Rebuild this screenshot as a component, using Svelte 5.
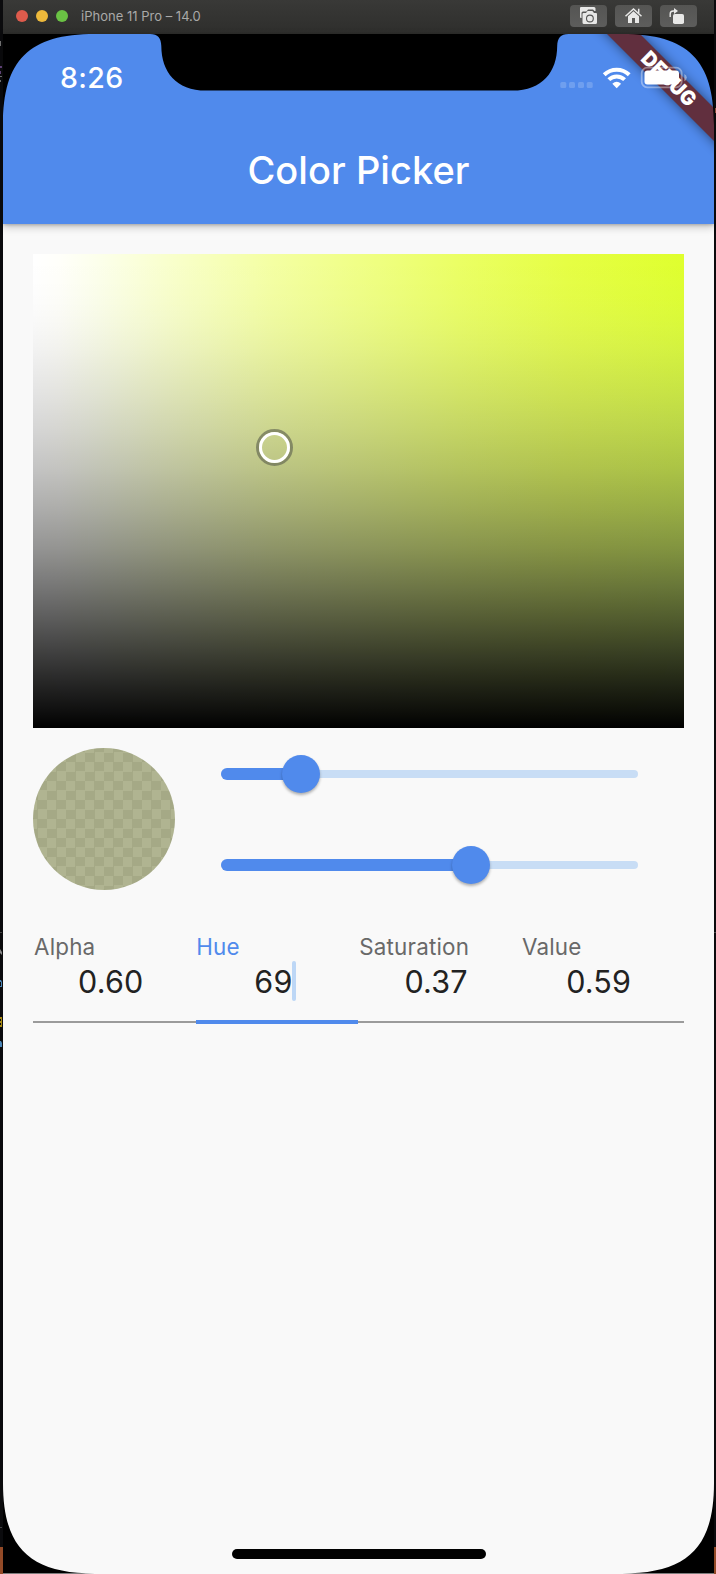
<script>
  const fields = [
    { label: 'Alpha', value: '0.60' },
    { label: 'Hue', value: '69', active: true },
    { label: 'Saturation', value: '0.37' },
    { label: 'Value', value: '0.59' }
  ];
  const sliders = [19.2, 60];
  // Darkness of the brightness axis, from the top edge to the bottom edge.
  const curve = [
    [0, 0], [5, 0.002], [10, 0.012], [15, 0.028], [20, 0.052], [30, 0.112], [37, 0.165], [45, 0.232],
    [54, 0.325], [62, 0.42], [70, 0.535], [77, 0.64], [84, 0.75], [92, 0.875], [97, 0.95], [100, 1]
  ];
  const stops = curve.map(([at, a]) => `rgba(0,0,0,${a}) ${at}%`).join(',');
</script>

<div class="desktop">
  <svg class="edges" width="716" height="1574" viewBox="0 0 716 1574">
    <path d="M0 41h1v5H0zM0 76h2v1H0zM0 80h1v2H0z" fill="#777" />
    <path d="M0 66h2v2H0zM0 71h1v3H0z" fill="#66477f" />
    <path d="M0 932h2v1H0zM0 1527h2v1H0zM714 932h2v1h-2z" fill="#444" />
    <path d="M0 949l2 3v3l-2-2z" fill="#888" />
    <path d="M0 980h1l1 2v5H0v-1h1v-4H0zM0 1041h1l1 2v4H0z" fill="#4b86b8" />
    <path d="M0 1017h2v10H0v-2h1v-2H0v-2h1v-2H0z" fill="#a98b13" />
    <path d="M0 1547h3v27H0zM714 1547h2v27h-2z" fill="#934a27" />
    <path d="M715 108h1v5h-1z" fill="#9b5540" />
  </svg>
  <div class="window">
    <header class="titlebar">
      <i class="light red"></i><i class="light yellow"></i><i class="light green"></i>
      <span class="name">iPhone 11 Pro – 14.0</span>
      <div class="tools">
        <button aria-label="Screenshot">
          <svg width="37" height="22" viewBox="0 0 37 22">
            <path d="M11 2h13q1.500 0 1.500 1.500V6h-1l-1.500-1.500h-5l-1.500 2H13q-1.500 0-1.500 1.500v5H11q-1 0-1-1V3q0-1 1-1z" fill="#e8e8e7" />
            <path d="M13.500 8h2.500l1.600-2h4.800L24 8h2q1 0 1 1v8.500q0 1.500-1.500 1.500h-11.500q-1.500 0-1.500-1.500V9q0-1 1-1z" fill="#e8e8e7" />
            <circle cx="19.900" cy="13.500" r="3.400" fill="#e8e8e7" stroke="#555" stroke-width="1.100" />
          </svg>
        </button>
        <button aria-label="Home">
          <svg width="37" height="22" viewBox="0 0 37 22">
            <path d="M10.500 11.300 18.500 4l8 7.300M23.700 3.800V8" fill="none" stroke="#e8e8e7" stroke-width="1.500" />
            <path d="M13 11.200 18.500 6.300 24 11.200V18H20v-5h-3v5h-4z" fill="#e8e8e7" />
          </svg>
        </button>
        <button aria-label="Rotate">
          <svg width="37" height="22" viewBox="0 0 37 22">
            <rect x="13" y="9" width="11" height="10" rx="1.800" fill="#e8e8e7" />
            <path d="M10.200 12V9q0-3 3-3h2" fill="none" stroke="#e8e8e7" stroke-width="1.400" />
            <path d="M14 3l4 3-4 3z" fill="#e8e8e7" />
          </svg>
        </button>
      </div>
    </header>

    <main class="screen">
      <div class="appbar">
        <div class="status"><span class="time">8:26</span></div>
        <h1>Color Picker</h1>
      </div>

      <div class="content">
        <div class="palette">
          <div class="shade" style="background-image: linear-gradient({stops})"></div>
          <div class="tint"></div>
          <span class="picker"></span>
        </div>

        <div class="controls">
          <div class="swatch"></div>
          <div class="sliders">
            {#each sliders as v}
              <div class="slider">
                <span class="track"></span>
                <span class="fill" style="width: {v}%"></span>
                <span class="thumb" style="left: {v}%"></span>
              </div>
            {/each}
          </div>
        </div>

        <div class="fields">
          {#each fields as f}
            <div class="field" class:active={f.active}>
              <span class="label">{f.label}</span>
              <span class="value">{f.value}{#if f.active}<i class="caret"></i>{/if}</span>
            </div>
          {/each}
        </div>
      </div>
      <div class="home"></div>

      <svg class="overlay" width="711" height="1540" viewBox="3 34 711 1540">
        <defs>
          <filter id="soft" x="-30%" y="-30%" width="160%" height="160%"><feGaussianBlur stdDeviation="6" /></filter>
        </defs>
        <g fill="#fff" fill-opacity=".18">
          <rect x="560.300" y="82" width="6" height="6" rx="1.500" />
          <rect x="569" y="82" width="6" height="6" rx="1.500" />
          <rect x="578" y="82" width="6" height="6" rx="1.500" />
          <rect x="586.700" y="82" width="6" height="6" rx="1.500" />
        </g>
        <path d="M593 20 734 161H767L626 20z" fill="#000" opacity=".5" filter="url(#soft)" />
        <path d="M593 20 734 161V128L626 20z" fill="#612f3e" />
        <text x="0" y="7.200" transform="translate(669 78.800) rotate(45)" text-anchor="middle" textLength="68" lengthAdjust="spacingAndGlyphs" class="debug">DEBUG</text>
        <g fill="none" stroke="#fff" stroke-width="4">
          <path d="M604.200 74.800A18 18 0 0 1 629.200 74.800" />
          <path d="M608.800 79.600A11.300 11.300 0 0 1 624.600 79.600" />
        </g>
        <path d="M612.300 83.800q4.400-4.200 8.800 0l-4.400 4.400z" fill="#fff" />
        <rect x="641.700" y="67.700" width="40" height="19.600" rx="5.500" fill="none" stroke="#fff" stroke-opacity=".38" stroke-width="1.800" />
        <rect x="644.500" y="70.500" width="34.500" height="14" rx="3" fill="#fff" />
        <path d="M684.300 74q2.500 1 2.500 3.600t-2.500 3.600z" fill="#fff" fill-opacity=".42" />
        <path fill="#000" d="M3 34V125C3 60 29 34 95 34zM150 34C158 34 161 38 161.300 46C161.500 72 176 90.600 206 90.600H512.500C542.500 90.600 557 72 557.200 46C557.500 38 560.500 34 568.500 34zM714 34V125C714 60 688 34 622 34zM3 1573.500V1483C3 1547 29 1573.500 95 1573.500zM714 1573.500V1483C714 1547 688 1573.500 622 1573.500z" />
      </svg>
    </main>
  </div>
</div>

<style>
  :global(body) { background: #0b0b0d; overflow: hidden; }
  * { box-sizing: border-box; }
  .desktop { position: relative; width: 716px; height: 1574px; padding-left: 3px; background: #0b0b0d; font-family: Inter, "Liberation Sans", sans-serif; }
  .edges { position: absolute; left: 0; top: 0; }
  .window { position: relative; width: 711px; height: 1574px; display: flex; flex-direction: column; border-radius: 0 0 4px 4px; }
  .titlebar { height: 34px; display: flex; align-items: center; padding: 0 17px 2px 13px; background: linear-gradient(#393937, #2e2e2c); }
  .light { width: 12px; height: 12px; border-radius: 50%; margin-right: 8px; }
  .red { background: #de5b4c; }
  .yellow { background: #edb93b; }
  .green { background: #6ac244; }
  .name { font-size: 13px; letter-spacing: .01px; color: #a9a9a8; margin-left: 5px; white-space: nowrap; }
  .tools { display: flex; gap: 8px; margin-left: auto; }
  button { width: 37px; height: 22px; padding: 0; border: 0; border-radius: 4px; background: linear-gradient(#555553, #5d5d5c); }
  button svg { display: block; }
  .screen { position: relative; height: 1540px; display: flex; flex-direction: column; background: #f9f9f9; }
  .appbar { height: 190px; background: #508aec; color: #fff; box-shadow: 0 3px 8px rgba(0,0,0,.22), 0 1px 3px rgba(0,0,0,.2); }
  .status { height: 84px; padding: 26px 0 0 57px; }
  .time { display: block; font-size: 28.500px; line-height: 36px; font-weight: 500; letter-spacing: .35px; }
  h1 { margin: 0; padding-top: 29px; font-size: 38px; line-height: 46px; font-weight: 500; text-align: center; letter-spacing: .06px; }
  .content { padding: 30px 30px 0; }
  .palette { position: relative; isolation: isolate; height: 474px; width: 650.500px; background: linear-gradient(90deg, #fff 0%, #fffffa 4%, #fcffeb 10%, #f9ffcf 20%, #f4ffa2 37%, #f0ff86 50%, #ebff64 65%, #e6fe43 82%, #dfff2d 100%); }
  .shade, .tint { position: absolute; inset: 0; }
  .tint { mix-blend-mode: screen; background: linear-gradient(#000 0%, #00000a 10%, #000018 20%, #000026 35%, #00002a 58%, #000026 70%, #000017 85%, #000 100%); -webkit-mask-image: linear-gradient(90deg, transparent, #000); mask-image: linear-gradient(90deg, transparent, #000); }
  .picker { position: absolute; left: 223px; top: 174.500px; width: 37px; height: 37px; border-radius: 50%; border: 3px solid rgba(104,108,84,.7); }
  .picker::after { content: ""; position: absolute; inset: 0; border: 3px solid #fff; border-radius: 50%; }
  .controls { display: flex; margin-top: 20px; gap: 46px; }
  .swatch { width: 142px; height: 142px; border-radius: 50%; background: repeating-conic-gradient(#a5a986 0 25%, #b0b491 0 50%) 71px 71px / 19px 19px; }
  .sliders { width: 417px; padding-top: 6.600px; display: flex; flex-direction: column; gap: 53px; }
  .slider { position: relative; height: 38px; display: flex; align-items: center; }
  .track { width: 100%; height: 8px; border-radius: 4px; background: #c8ddf5; }
  .fill { position: absolute; left: 0; height: 12px; border-radius: 6px; background: #508aec; }
  .thumb { position: absolute; width: 38px; height: 38px; margin-left: -19px; border-radius: 50%; background: #508aec; box-shadow: 0 2px 3px rgba(0,0,0,.3); }
  .fields { display: grid; grid-template-columns: repeat(4, 1fr); width: 650.500px; margin-top: 44px; }
  .field { height: 90px; display: flex; flex-direction: column; background: linear-gradient(#9b9b9b, #9b9b9b) 0 87px / 100% 2px no-repeat; }
  .field.active { background: linear-gradient(#508aec, #508aec) 0 86px / 100% 4px no-repeat; }
  .label { font-size: 22.400px; line-height: 28px; letter-spacing: .2px; margin-top: -1px; padding-left: 1px; color: #696969; }
  .active .label { color: #508aec; padding-left: .500px; }
  .value { position: relative; align-self: center; margin: 1px 7px 0 0; font-size: 30.500px; line-height: 40px; letter-spacing: .2px; color: #222; }
  .caret { position: absolute; left: 100%; top: -1px; width: 4px; height: 40px; margin-left: -1px; border-radius: 2px; background: #bdd7f6; }
  .home { width: 254px; height: 10px; border-radius: 5px; background: #000; margin: auto auto 15px 229px; }
  .overlay { position: absolute; left: 0; top: 0; }
  .debug { font: 900 20.500px Inter, sans-serif; fill: #fff; }
</style>
